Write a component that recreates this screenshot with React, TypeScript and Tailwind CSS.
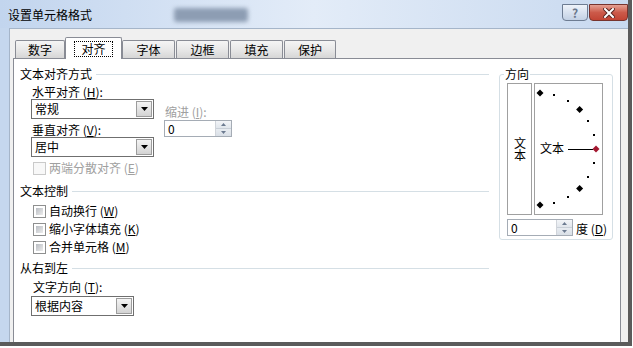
import type { ReactNode } from 'react'

const FONT = "font-['Noto_Sans_CJK_SC',sans-serif]"

function Hot({ k }: { k: string }) {
  return (
    <>
      {' ('}
      <span className="underline underline-offset-[1px]">{k}</span>
      {')'}
    </>
  )
}

function Heading({ children }: { children: ReactNode }) {
  return (
    <div className="flex items-center h-[16px]">
      <span className="text-[12px] leading-[16px]">{children}</span>
      <div className="flex-1 h-px bg-[#d5dfe5] ml-[4px]" />
    </div>
  )
}

function DropButton() {
  return (
    <div className="w-[16px] h-[16px] mr-[1px] border border-[#9c9c9c] bg-linear-to-b from-[#f4f4f4] to-[#d3d3d3] flex items-center justify-center">
      <svg width="7" height="4" viewBox="0 0 7 4">
        <path d="M0 0H7L3.5 4Z" fill="#000" />
      </svg>
    </div>
  )
}

function Combo({ value, width }: { value: string; width: string }) {
  return (
    <div className={`${width} h-[20px] border border-[#6f6f6f] bg-white flex items-center`}>
      <span className="flex-1 pl-[3px] text-[12px] leading-[14px]">{value}</span>
      <DropButton />
    </div>
  )
}

function Spin({ width }: { width: string }) {
  return (
    <div className={`${width} h-[17px] border border-[#a5acb5] bg-white flex`}>
      <span className="flex-1 pl-[3px] text-[12px] leading-[15px]">0</span>
      <div className="w-[16px] flex flex-col border-l border-[#d0d4da]">
        <div className="flex-1 bg-linear-to-b from-[#f3f5f8] to-[#e1e6ec] flex items-center justify-center border-b border-[#c9d0d8]">
          <svg width="5" height="3" viewBox="0 0 5 3">
            <path d="M0 3H5L2.5 0Z" fill="#6c7b90" />
          </svg>
        </div>
        <div className="flex-1 bg-linear-to-b from-[#e8ecf1] to-[#d9dfe6] flex items-center justify-center">
          <svg width="5" height="3" viewBox="0 0 5 3">
            <path d="M0 0H5L2.5 3Z" fill="#6c7b90" />
          </svg>
        </div>
      </div>
    </div>
  )
}

function Checkbox({ label, k, disabled = false }: { label: string; k: string; disabled?: boolean }) {
  return (
    <div className="flex items-center h-[18px]">
      {disabled ? (
        <div className="ml-[1px] w-[13px] h-[13px] border border-[#cacaca] bg-[#f8f8f8]" />
      ) : (
        <div className="ml-[1px] w-[13px] h-[13px] border border-[#8e8f8f] p-[2px] bg-white">
          <div className="w-full h-full bg-linear-to-br from-[#b9bdc3] to-[#ececec]" />
        </div>
      )}
      <span className={`ml-[3px] text-[12px] leading-[14px] ${disabled ? 'text-[#a0a0a0]' : 'text-black'}`}>
        {label}
        <Hot k={k} />
      </span>
    </div>
  )
}

function Tab({ label, width, selected = false }: { label: string; width: string; selected?: boolean }) {
  if (selected) {
    return (
      <div className={`${width} h-[22px] -mb-px relative z-10 bg-white border border-b-0 border-[#898c95] rounded-t-[2px] flex items-start justify-center pt-[3px]`}>
        <span className="px-[6px] border border-dotted border-black text-[12px] leading-[14px]">{label}</span>
      </div>
    )
  }
  return (
    <div className={`${width} h-[18px] border border-b-0 border-[#898c95] rounded-t-[2px] bg-linear-to-b from-[#f5f5f5] via-[#e8e8e8] to-[#d6d6d6] flex items-center justify-center`}>
      <span className="text-[12px] leading-[14px]">{label}</span>
    </div>
  )
}

function Dial() {
  const cx = 5
  const cy = 65
  const r = 56
  const pt = (deg: number) => {
    const a = (deg * Math.PI) / 180
    return { x: cx + r * Math.cos(a), y: cy - r * Math.sin(a) }
  }
  const big = [90, 45, -45, -90]
  const small = [75, 60, 30, 15, -15, -30, -60, -75]
  const diamond = (x: number, y: number, s: number) =>
    `${x},${y - s} ${x + s},${y} ${x},${y + s} ${x - s},${y}`
  const red = pt(0)
  return (
    <svg width="67" height="130" viewBox="0 0 67 130">
      {big.map((d) => {
        const p = pt(d)
        return <polygon key={d} points={diamond(p.x, p.y, 3.5)} fill="#000" />
      })}
      {small.map((d) => {
        const p = pt(d)
        return <rect key={d} x={Math.round(p.x) - 1} y={Math.round(p.y) - 1} width="2" height="2" fill="#000" />
      })}
      <text x="5" y="69" fontSize="12" fontFamily="'Noto Sans CJK SC', sans-serif" fill="#000">
        文本
      </text>
      <line x1="33" y1="65.5" x2="58" y2="65.5" stroke="#000" strokeWidth="1" />
      <polygon points={diamond(red.x, red.y, 3.5)} fill="#a3172f" />
    </svg>
  )
}

export default function App() {
  return (
    <div className={`w-[633px] h-[348px] bg-white overflow-hidden text-black ${FONT}`}>
      <div className="w-[632px] h-[346px] border-r-4 border-b-4 border-[#5b5b5b] bg-[#c5d7ee] flex flex-col">
        {/* title bar */}
        <div className="h-[28px] flex items-start bg-linear-to-r from-[#c2d5ee] via-[#e3ecf8] to-[#c8d9ef]">
          <span className="ml-[8px] mt-[8px] text-[12px] leading-[14px]">设置单元格格式</span>
          <div className="ml-[82px] mt-[8px] w-[74px] h-[14px] rounded-[3px] bg-[#8d9db3] blur-[2px]" />
          <div className="flex-1" />
          <div className="mt-[4px] w-[26px] h-[17px] rounded-b-[4px] border border-[#6d7c92] bg-linear-to-b from-[#eef3fa] to-[#c3d1e4] flex items-center justify-center">
            <span className="text-[12px] leading-[12px] font-bold text-[#6a788c]">?</span>
          </div>
          <div className="mt-[4px] ml-px w-[39px] h-[17px] rounded-b-[4px] border border-[#77342e] bg-linear-to-b from-[#e4a093] via-[#cc5a4a] to-[#c24434] flex items-center justify-center">
            <svg width="12" height="10" viewBox="0 0 12 10">
              <path d="M2 1L10 9M10 1L2 9" stroke="#5a2520" strokeWidth="4" strokeLinecap="square" />
              <path d="M2 1L10 9M10 1L2 9" stroke="#fff" strokeWidth="2" strokeLinecap="square" />
            </svg>
          </div>
        </div>

        {/* body */}
        <div className="flex-1 flex pl-[9px]">
          <div className="flex-1 bg-[#f0f0f0] border-l border-t border-[#a5b5c9] pl-[3px] pr-[7px] pt-[11px] flex flex-col">
            <div className="flex items-end h-[18px] ml-[2px]">
              <Tab label="数字" width="w-[50px]" />
              <Tab label="对齐" width="w-[57px]" selected />
              <Tab label="字体" width="w-[53px]" />
              <div className="w-[1px]" />
              <Tab label="边框" width="w-[53px]" />
              <div className="w-[1px]" />
              <Tab label="填充" width="w-[53px]" />
              <div className="w-[1px]" />
              <Tab label="保护" width="w-[52px]" />
            </div>

            {/* tab page */}
            <div className="flex-1 bg-white border border-b-0 border-[#898c95] flex">
              <div className="w-[475px] pl-[6px] pt-[7px] flex flex-col">
                <Heading>文本对齐方式</Heading>
                <div className="ml-[12px] mt-[3px] flex">
                  <div className="-ml-px flex flex-col">
                    <span className="pl-[1px] h-[14px] text-[12px] leading-[14px]">
                      水平对齐
                      <Hot k="H" />:
                    </span>
                    <Combo value="常规" width="w-[123px]" />
                    <span className="pl-[1px] mt-[4px] h-[14px] text-[12px] leading-[14px]">
                      垂直对齐
                      <Hot k="V" />:
                    </span>
                    <Combo value="居中" width="w-[123px]" />
                  </div>
                  <div className="ml-[10px] pt-[20px] flex flex-col">
                    <span className="pl-[1px] h-[14px] text-[12px] leading-[14px] text-[#a0a0a0]">
                      缩进
                      <Hot k="I" />:
                    </span>
                    <div className="mt-[1px]">
                      <Spin width="w-[68px]" />
                    </div>
                  </div>
                </div>
                <div className="ml-[12px] mt-[2px]">
                  <Checkbox label="两端分散对齐" k="E" disabled />
                </div>

                <div className="mt-[6px]">
                  <Heading>文本控制</Heading>
                </div>
                <div className="ml-[12px] mt-[3px] flex flex-col">
                  <Checkbox label="自动换行" k="W" />
                  <Checkbox label="缩小字体填充" k="K" />
                  <Checkbox label="合并单元格" k="M" />
                </div>

                <div className="mt-[4px]">
                  <Heading>从右到左</Heading>
                </div>
                <div className="ml-[12px] mt-[4px] flex flex-col">
                  <span className="pl-[1px] h-[14px] text-[12px] leading-[14px]">
                    文字方向
                    <Hot k="T" />:
                  </span>
                  <div className="-ml-px mt-[2px]">
                    <Combo value="根据内容" width="w-[103px]" />
                  </div>
                </div>
              </div>

              {/* orientation group */}
              <div className="ml-[10px] mt-[15px] w-[114px] h-[166px] border border-[#d5dfe5] rounded-[3px] pl-[7px] pr-[8px] flex flex-col">
                <span className="-mt-[9px] -ml-[3px] px-[1px] w-fit bg-white text-[12px] leading-[16px]">方向</span>
                <div className="mt-[1px] flex gap-[2px]">
                  <div className="w-[25px] h-[132px] border border-[#a0a0a0] flex items-center justify-center">
                    <span className="[writing-mode:vertical-rl] text-[12px] leading-[12px] tracking-[0px]">文本</span>
                  </div>
                  <div className="w-[69px] h-[132px] border border-[#a0a0a0]">
                    <Dial />
                  </div>
                </div>
                <div className="mt-[4px] flex items-center">
                  <div className="h-[19px] flex">
                    <Spin width="w-[66px]" />
                  </div>
                  <span className="ml-[3px] text-[12px] leading-[14px] whitespace-nowrap">
                    度
                    <Hot k="D" />
                  </span>
                </div>
              </div>
            </div>
          </div>
        </div>
      </div>
    </div>
  )
}
